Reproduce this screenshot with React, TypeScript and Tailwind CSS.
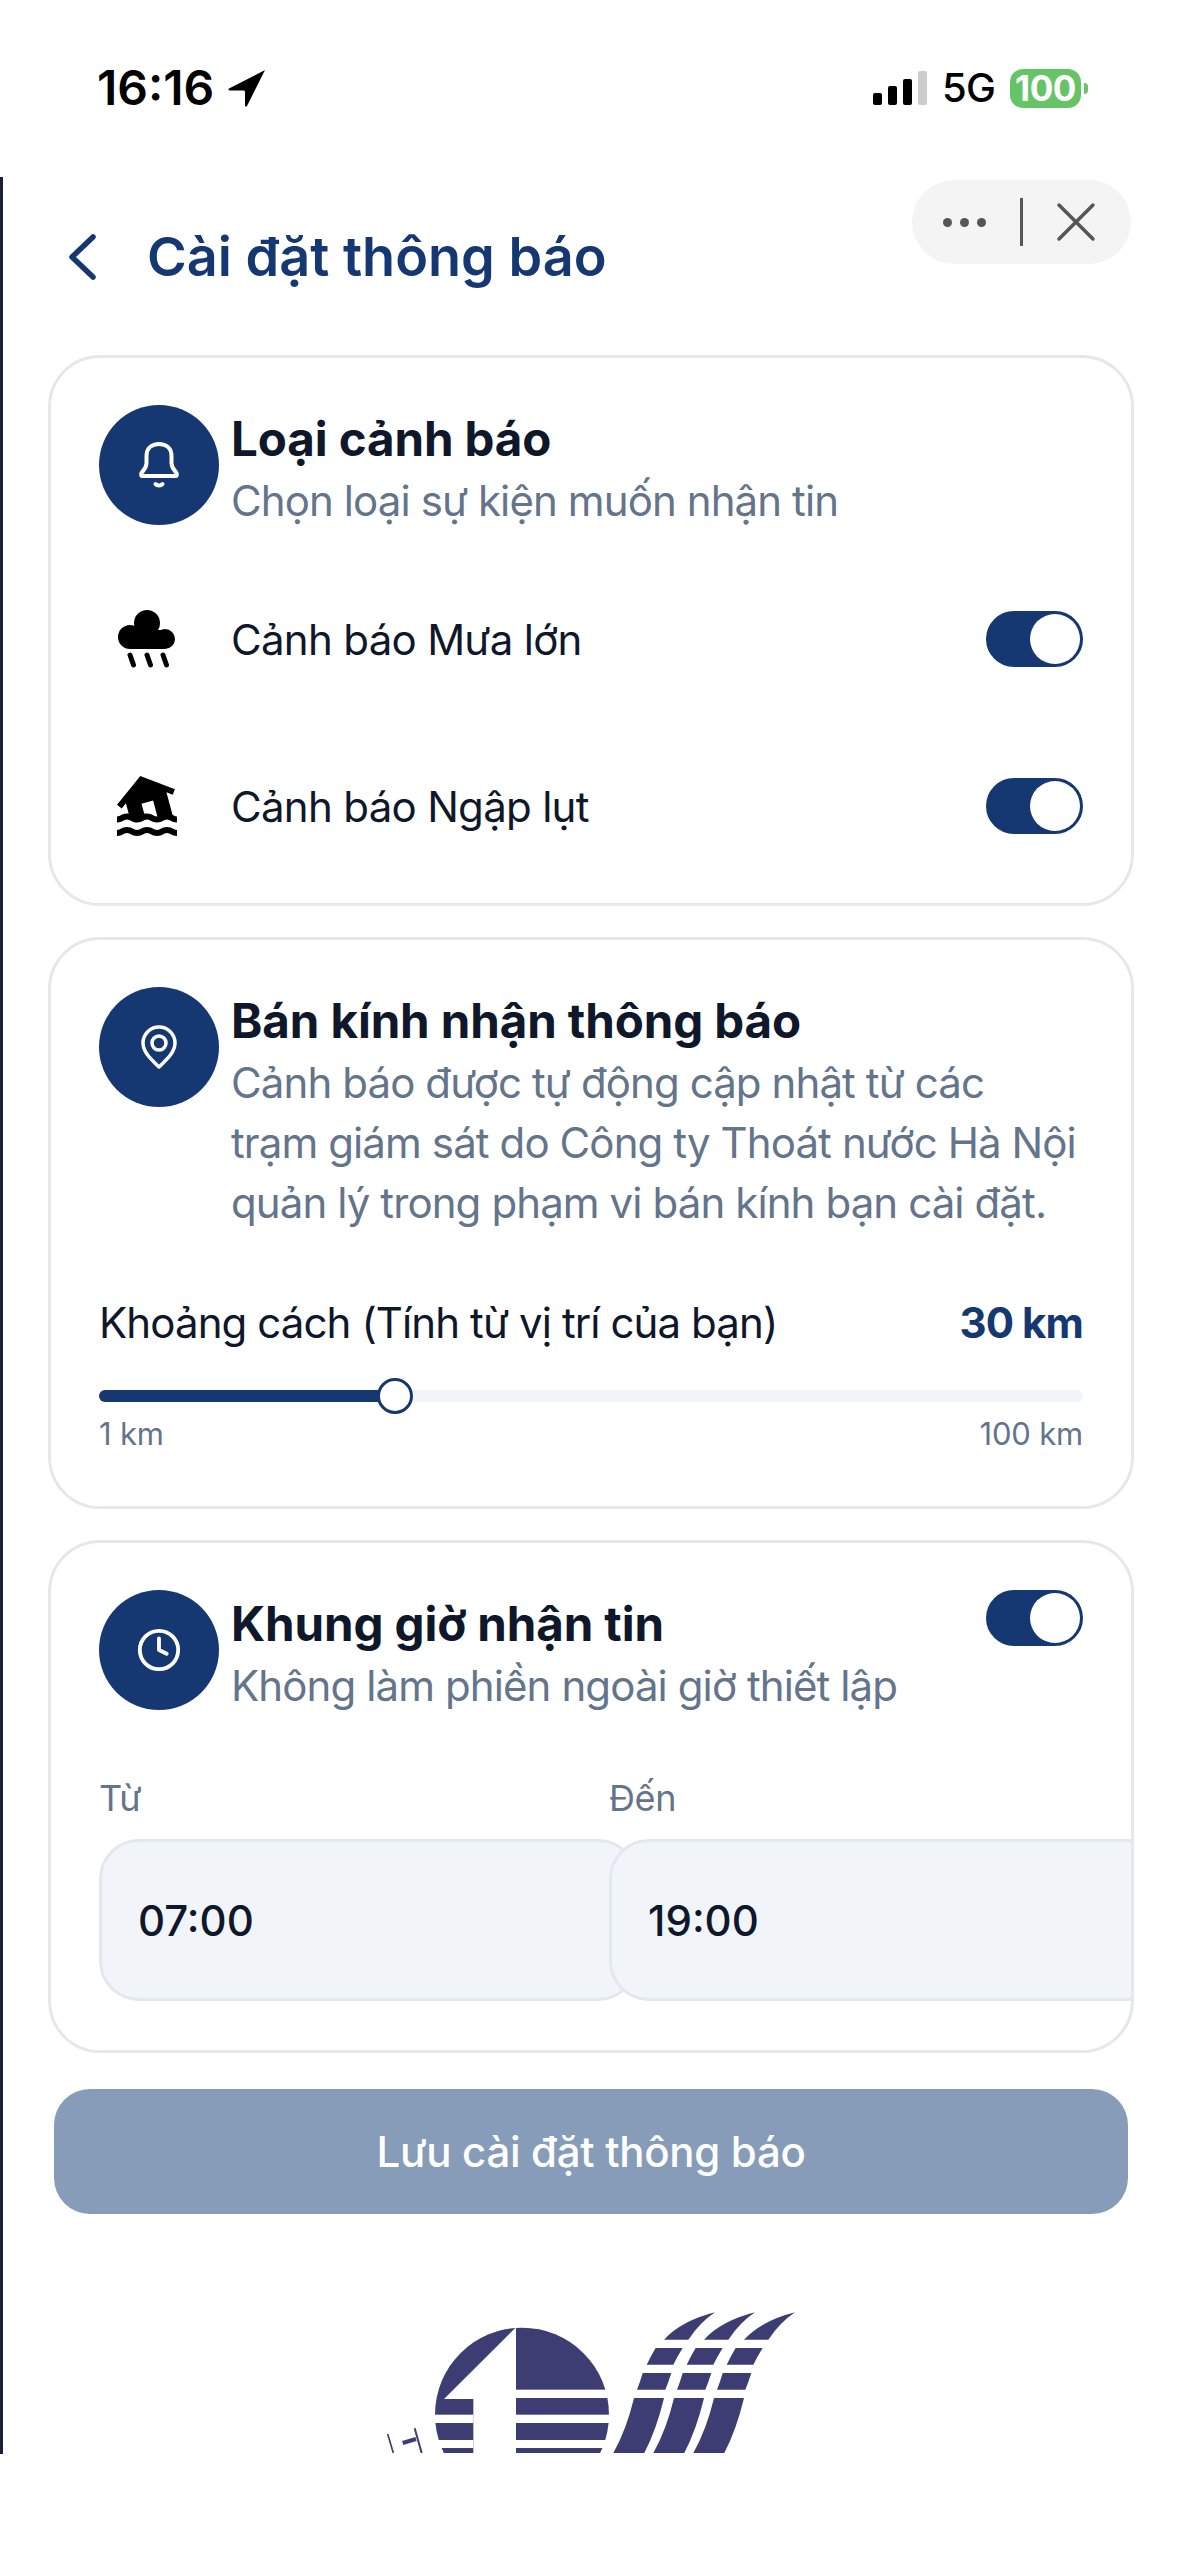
import React from 'react'
import { Clock } from 'lucide-react'
import { MdFlood } from 'react-icons/md'

const font = { fontFamily: 'Inter, "Noto Sans", sans-serif' }

const Toggle = () => (
    <div className="flex h-[56px] w-[97px] shrink-0 items-center justify-end rounded-full border-[3px] border-[#163872] bg-[#163872]">
        <div className="h-[50px] w-[50px] rounded-full bg-white" />
    </div>
)

const Bell = () => (
    <svg width="40" height="46" viewBox="0 0 40 46" fill="none" stroke="white" strokeWidth="4" strokeLinecap="round" strokeLinejoin="round">
        <path d="M3 34h34c1 0 1-2 .5-3-2-3-5-5-5-10v-7C32.500 6 27 2 20 2S7.500 6 7.500 14v7c0 5-3 7-5 10-.5 1-.5 3 .5 3z" />
        <path d="M16.500 42c1.500 2 5.500 2 7 0" />
    </svg>
)

const Pin = () => (
    <svg width="36" height="44" viewBox="0 0 36 44" fill="none" stroke="white" strokeWidth="3.500" strokeLinejoin="round">
        <path d="M18 42C12 36 2 28 2 18A16 16 0 0 1 34 18C34 28 24 36 18 42Z" />
        <circle cx="18" cy="18" r="7" />
    </svg>
)

const RainCloud = () => (
    <svg width="58" height="58" viewBox="0 0 58 58" fill="black">
        <circle cx="29" cy="13" r="13" />
        <circle cx="12" cy="27" r="12" />
        <circle cx="47" cy="29" r="10" />
        <rect x="12" y="20" width="35" height="19" />
        <path d="M12 45l3.500 10M29 45l3.500 10M45 45l3.500 10" stroke="black" strokeWidth="5" strokeLinecap="round" />
    </svg>
)

const IconCircle = ({ children }: { children: React.ReactNode }) => (
    <div className="flex h-[120px] w-[120px] shrink-0 items-center justify-center rounded-full bg-[#163872]">{children}</div>
)

const CardHead = ({ title, lines, right }: { title: string; lines: string[]; right?: React.ReactNode }) => (
    <div className="flex items-start">
        <IconCircle>
            {title === 'Loại cảnh báo' && <Bell />}
            {title === 'Bán kính nhận thông báo' && <Pin />}
            {title === 'Khung giờ nhận tin' && <Clock size={46} color="white" strokeWidth={2} />}
        </IconCircle>
        <div className="ml-[12px] flex-1 pt-[4px]">
            <h2 className="text-[47.500px] leading-[60px] font-bold tracking-[-0.1px] text-[#0f172a]">{title}</h2>
            <div className="mt-[2px]">
                {lines.map((line, index) => (
                    <p key={index} className="text-[42px] leading-[60px] tracking-[-0.9px] whitespace-nowrap text-[#64748b]">{line}</p>
                ))}
            </div>
        </div>
        {right}
    </div>
)

const AlertRow = ({ icon, label }: { icon: React.ReactNode; label: string }) => (
    <div className="flex h-[120px] items-center">
        <div className="flex w-[96px] items-center justify-center">{icon}</div>
        <span className="ml-[36px] flex-1 text-[42px] tracking-[-0.7px] text-[#0f172a]">{label}</span>
        <Toggle />
    </div>
)

const TimeBox = ({ label, value, last }: { label: string; value: string; last?: boolean }) => (
    <div className="w-[510px] shrink-0">
        <p className="text-[36px] leading-[48px] tracking-[-0.4px] text-[#64748b]">{label}</p>
        <div className={`mt-[17px] flex h-[162px] items-center rounded-[40px] border-[3px] border-[#e2e8f0] bg-[#f1f5f9] pl-[36px] text-[42px] font-medium text-[#0f172a] ${last ? 'w-[600px]' : 'w-[539px]'}`}>
            {value}
        </div>
    </div>
)

// logo shapes are in a 1500 wide space, the last row is cut by the page footer edge
const wingShift = [0, 120, 240]
const Logo = () => (
    <svg className="ml-[292px] block" width="500" height="174" viewBox="0 0 1500 522" fill="#3d3d74">
        <circle cx="546" cy="407" r="261" />
        <path d="M528 145L312 360H400V522H528Z" fill="white" />
        <rect x="528" y="332" width="300" height="25" fill="white" />
        <rect x="270" y="407" width="130" height="25" fill="white" />
        <rect x="528" y="407" width="300" height="25" fill="white" />
        <rect x="270" y="483" width="130" height="24" fill="white" />
        <rect x="528" y="483" width="300" height="24" fill="white" />
        {wingShift.map((dx) => (
            <g key={dx} transform={`translate(${dx} 0)`}>
                <path d="M1125 100Q1025 125 972 182H1045Q1080 130 1125 100Z" />
                <path d="M947 207H1028Q1012 232 1000 257H920Q932 232 947 207Z" />
                <path d="M908 282H994Q985 310 976 332H891Q900 310 908 282Z" />
                <path d="M882 357H972Q950 450 913 522H820Q860 450 882 357Z" />
            </g>
        ))}
        <path d="M143 465L160 522" stroke="#3d3d74" strokeWidth="5" />
        <path d="M188 492L228 480" stroke="#3d3d74" strokeWidth="12" />
        <path d="M224 448L245 522" stroke="#3d3d74" strokeWidth="6" />
    </svg>
)

const StatusBar = () => (
    <div className="flex h-[177px] shrink-0 items-start justify-between pt-[64px] pr-[91px] pl-[97px] text-black">
        <div className="flex items-center">
            <span className="text-[48px] leading-[48px] font-semibold">16:16</span>
            <svg className="ml-[14px]" width="38" height="38" viewBox="0 0 38 38" fill="black">
                <path d="M37 1L1 19.500C0 20 .500 21.500 1.500 21.500H15.500C16.500 21.500 17 22 17 23V36.500C17 37.500 18.500 38 19 37Z" />
            </svg>
        </div>
        <div className="flex items-center gap-[15px] pt-[4px]">
            <div className="flex items-end gap-[6px]">
                <div className="h-[12px] w-[9px] rounded-[2px] bg-black" />
                <div className="h-[19px] w-[9px] rounded-[2px] bg-black" />
                <div className="h-[26px] w-[9px] rounded-[2px] bg-black" />
                <div className="h-[34px] w-[9px] rounded-[2px] bg-[#cccccc]" />
            </div>
            <span className="text-[40px] leading-[40px] font-medium tracking-[-0.8px]">5G</span>
            <div className="flex items-center gap-[3px]">
                <div className="flex h-[39px] w-[71px] items-center justify-center rounded-[13px] bg-[#65c466] text-[35px] font-bold tracking-[-0.5px] text-white">100</div>
                <div className="h-[11px] w-[4px] rounded-r-full bg-[#65c466]" />
            </div>
        </div>
    </div>
)

const Capsule = () => (
    <div className="absolute top-[3px] right-[48px] flex h-[84px] w-[219px] items-center rounded-full bg-[#f4f4f4] pl-[31px]">
        <div className="flex gap-[8px]">
            <div className="h-[9px] w-[9px] rounded-full bg-[#555555]" />
            <div className="h-[9px] w-[9px] rounded-full bg-[#555555]" />
            <div className="h-[9px] w-[9px] rounded-full bg-[#555555]" />
        </div>
        <div className="ml-[34px] h-[48px] w-[3px] bg-[#555555]" />
        <svg className="ml-[33px]" width="40" height="40" viewBox="0 0 40 40" stroke="#555555" strokeWidth="3.500" strokeLinecap="round">
            <path d="M3 3L37 37M37 3L3 37" />
        </svg>
    </div>
)

const App = () => {
    return (
        <div className="flex h-[2556px] w-[1179px] flex-col overflow-hidden bg-white" style={font}>
            <StatusBar />
            <main className="relative h-[2277px] overflow-hidden border-l-[3px] border-[#1a2036] pr-[45px] pl-[45px]">
                <Capsule />
                <header className="flex h-[178px] items-start pt-[40px]">
                    <svg className="mt-[17px] ml-[20px]" width="30" height="46" viewBox="0 0 30 46" fill="none" stroke="#163872" strokeWidth="5.500" strokeLinecap="round" strokeLinejoin="round">
                        <path d="M25 3L4 23L25 43" />
                    </svg>
                    <h1 className="ml-[49px] text-[54px] leading-[80px] font-semibold text-[#163872]">Cài đặt thông báo</h1>
                </header>

                <section className="h-[551px] overflow-hidden rounded-[52px] border-[3px] border-[#e5e7eb] px-[48px] pt-[47px]">
                    <CardHead title="Loại cảnh báo" lines={['Chọn loại sự kiện muốn nhận tin']} />
                    <div className="mt-[48px] flex flex-col gap-[47px]">
                        <AlertRow icon={<RainCloud />} label="Cảnh báo Mưa lớn" />
                        <AlertRow icon={<MdFlood size={72} color="black" />} label="Cảnh báo Ngập lụt" />
                    </div>
                </section>

                <section className="mt-[31px] h-[572px] overflow-hidden rounded-[52px] border-[3px] border-[#e5e7eb] px-[48px] pt-[47px]">
                    <CardHead
                        title="Bán kính nhận thông báo"
                        lines={['Cảnh báo được tự động cập nhật từ các', 'trạm giám sát do Công ty Thoát nước Hà Nội', 'quản lý trong phạm vi bán kính bạn cài đặt.']}
                    />
                    <div className="mt-[60px] flex items-center justify-between text-[42px] leading-[60px] tracking-[-0.9px]">
                        <span className="text-[#0f172a]">Khoảng cách (Tính từ vị trí của bạn)</span>
                        <span className="font-bold text-[#163872]">30 km</span>
                    </div>
                    <div className="relative mt-[37px] h-[12px] rounded-full bg-[#f1f5f9]">
                        <div className="h-full w-[296px] rounded-full bg-[#163872]" />
                        <div className="absolute top-[-12px] left-[278px] h-[36px] w-[36px] rounded-full border-[3px] border-[#163872] bg-white" />
                    </div>
                    <div className="mt-[12px] flex justify-between text-[31px] leading-[40px] tracking-[-0.2px] text-[#64748b]">
                        <span>1 km</span>
                        <span>100 km</span>
                    </div>
                </section>

                <section className="mt-[31px] h-[513px] overflow-hidden rounded-[52px] border-[3px] border-[#e5e7eb] px-[48px] pt-[47px]">
                    <CardHead title="Khung giờ nhận tin" lines={['Không làm phiền ngoài giờ thiết lập']} right={<Toggle />} />
                    <div className="mt-[58px] flex">
                        <TimeBox label="Từ" value="07:00" />
                        <TimeBox label="Đến" value="19:00" last />
                    </div>
                </section>

                <button className="mt-[36px] ml-[6px] flex h-[125px] w-[1074px] items-center justify-center rounded-[36px] bg-[#879cb8] text-[42px] font-medium tracking-[-0.3px] text-white">
                    Lưu cài đặt thông báo
                </button>

                <div className="mt-[65px]">
                    <Logo />
                </div>
            </main>
        </div>
    )
}

export default App
